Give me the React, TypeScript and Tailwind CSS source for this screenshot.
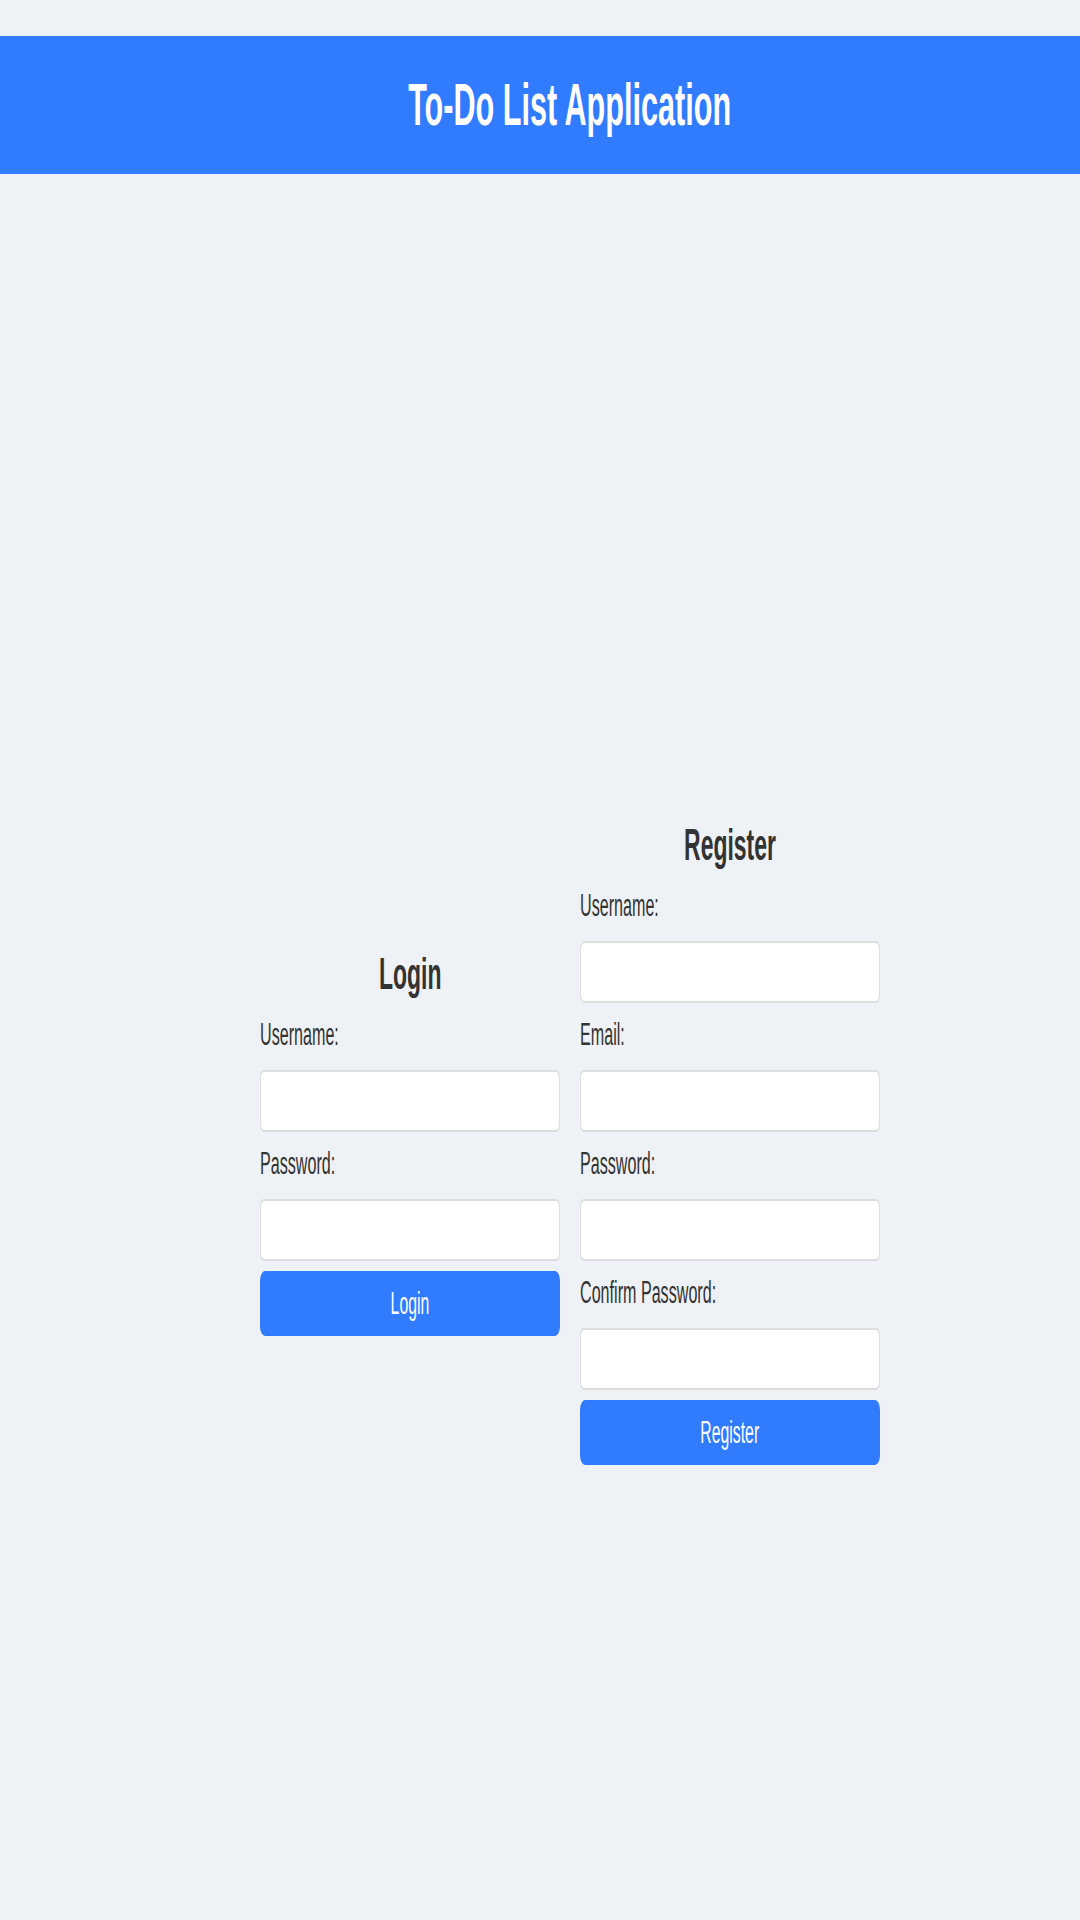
const sans = "font-['Liberation_Sans',Arial,sans-serif]"

export default function App() {
  return (
    <div className={`min-h-[1920px] bg-[#eef1f5] pt-[36px] ${sans}`}>
      <header className="flex h-[138px] items-center justify-center bg-[#307bff] pl-[59px]">
        <h1 className="text-[60px] font-bold leading-[70px] text-white">
          <span className="inline-block scale-x-[0.51]">To-Do List Application</span>
        </h1>
      </header>
      <main className="flex items-center justify-center gap-[20px] pl-[60px] pt-[645px]">
        <section className="flex w-[300px] flex-col gap-[10px]">
          <Heading>Login</Heading>
          <Field label="Username:" type="text" />
          <Field label="Password:" type="password" />
          <SubmitButton>Login</SubmitButton>
        </section>
        <section className="flex w-[300px] flex-col gap-[10px]">
          <Heading>Register</Heading>
          <Field label="Username:" type="text" />
          <Field label="Email:" type="email" />
          <Field label="Password:" type="password" />
          <Field label="Confirm Password:" type="password" />
          <SubmitButton>Register</SubmitButton>
        </section>
      </main>
    </div>
  )
}

function Heading({ children }: { children: string }) {
  return (
    <h2 className="mb-[3px] text-center text-[45px] font-bold leading-[52px] text-[#333333]">
      <span className="inline-block scale-x-[0.51]">{children}</span>
    </h2>
  )
}

function Field({ label, type }: { label: string; type: string }) {
  return (
    <div className="mt-[4px] flex flex-col">
      <label className="mb-[17px] block text-[31px] leading-[36px] text-[#333333]">
        <span className="inline-block origin-left scale-x-[0.52]">{label}</span>
      </label>
      <input
        type={type}
        className="h-[62px] w-full rounded-[4px/8px] border-x border-y-2 border-[#dddddd] bg-white"
      />
    </div>
  )
}

function SubmitButton({ children }: { children: string }) {
  return (
    <button
      type="button"
      className="h-[65px] w-full rounded-[5px/10px] bg-[#307bff] text-[31px] leading-[36px] text-white"
    >
      <span className="inline-block scale-x-[0.51]">{children}</span>
    </button>
  )
}
